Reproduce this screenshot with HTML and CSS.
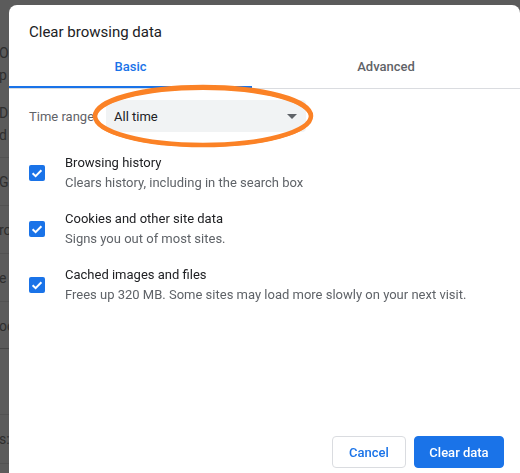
FILE: index.html
```html
<!DOCTYPE html>
<html>
<head>
<meta charset="utf-8">
<link rel="stylesheet" href="styles.css">
</head>
<body>
<div class="backdrop">
  <div class="bg-top"></div>
  <div class="bg-row r1"><span>O</span><span>p</span></div>
  <div class="bg-row r2"><span>D</span><span>d</span></div>
  <div class="bg-row r3"><span>G</span></div>
  <div class="bg-row r3"><span>ro</span></div>
  <div class="bg-row r3"><span>e</span></div>
  <div class="bg-row r4"><span>oo</span></div>
  <div class="bg-row r5"></div>
  <div class="bg-row r6"><span>s:</span></div>
</div>

<div class="dialog">
  <div class="title">Clear browsing data</div>
  <div class="tabs">
    <div class="tab active">Basic</div>
    <div class="tab">Advanced</div>
  </div>
  <div class="content">
    <div class="range">
      <div class="range-label">Time range</div>
      <div class="select"><span>All time</span><span class="arrow"></span></div>
    </div>
    <div class="items">
      <div class="item">
        <div class="cb"><svg width="16" height="16" viewBox="0 0 16 16"><path d="M3.6 8.2 L6.6 11.1 L12.4 5.2" fill="none" stroke="#fff" stroke-width="2"/></svg></div>
        <div class="item-text"><div class="item-title">Browsing history</div><div class="item-sub">Clears history, including in the search box</div></div>
      </div>
      <div class="item">
        <div class="cb"><svg width="16" height="16" viewBox="0 0 16 16"><path d="M3.6 8.2 L6.6 11.1 L12.4 5.2" fill="none" stroke="#fff" stroke-width="2"/></svg></div>
        <div class="item-text"><div class="item-title">Cookies and other site data</div><div class="item-sub">Signs you out of most sites.</div></div>
      </div>
      <div class="item">
        <div class="cb"><svg width="16" height="16" viewBox="0 0 16 16"><path d="M3.6 8.2 L6.6 11.1 L12.4 5.2" fill="none" stroke="#fff" stroke-width="2"/></svg></div>
        <div class="item-text"><div class="item-title">Cached images and files</div><div class="item-sub">Frees up 320 MB. Some sites may load more slowly on your next visit.</div></div>
      </div>
    </div>
  </div>
  <div class="footer">
    <button class="btn cancel">Cancel</button>
    <button class="btn primary">Clear data</button>
  </div>
</div>

<svg class="circle" width="240" height="80" viewBox="0 0 240 80">
  <ellipse cx="113" cy="34" rx="108" ry="29" fill="none" stroke="#fb8226" stroke-width="4.5"/>
  <ellipse cx="113" cy="35" rx="107.5" ry="28.5" fill="none" stroke="#fb8226" stroke-width="3"/>
</svg>
</body>
</html>
```

FILE: styles.css
```css
html, body {
  margin: 0;
  padding: 0;
  width: 520px;
  height: 473px;
  overflow: hidden;
  background: #5b5b5b;
  font-family: Roboto, "Liberation Sans", Arial, sans-serif;
}

.backdrop {
  display: flex;
  flex-direction: column;
  color: #2e2e2e;
  font-size: 14px;
}

.bg-top {
  height: 40px;
}

.bg-row {
  display: flex;
  flex-direction: column;
  border-bottom: 1px solid #525252;
  margin-left: -1px;
}

.bg-row span {
  line-height: 22px;
}

.r1 { height: 60px; padding-top: 2px; border-bottom: none; }
.r2 { height: 55px; padding-top: 0; }
.r3 { height: 47px; justify-content: center; }
.r4 { height: 47px; justify-content: flex-start; padding-top: 13px; box-sizing: border-box; border-bottom-color: #474747; }
.r5 { height: 65px; }
.r6 { height: 48px; justify-content: center; }

.dialog {
  position: fixed;
  left: 9px;
  top: 5px;
  width: 511px;
  height: 480px;
  background: #fff;
  border-radius: 8px;
  display: flex;
  flex-direction: column;
}

.title {
  padding: 17px 0 0 20px;
  line-height: 20px;
  font-size: 15px;
  color: #202124;
}

.tabs {
  display: flex;
  height: 46px;
  border-bottom: 1px solid #dadce0;
}

.tab {
  box-sizing: border-box;
  padding-top: 15px;
  line-height: 20px;
  font-size: 13px;
  font-weight: 500;
  color: #5f6368;
  text-align: center;
  flex: 1;
}

.tab.active {
  flex: 0 0 243px;
  color: #1a73e8;
  border-bottom: 2px solid #1a73e8;
}

.content {
  padding: 11px 0 0 20px;
}

.range {
  display: flex;
  align-items: center;
  height: 32px;
}

.range-label {
  width: 77px;
  font-size: 13px;
  color: #5f6368;
}

.select {
  width: 200px;
  height: 32px;
  box-sizing: border-box;
  background: #f1f3f4;
  border-radius: 4px;
  display: flex;
  align-items: center;
  justify-content: space-between;
  padding: 0 9px 0 8px;
  font-size: 13px;
  color: #202124;
}

.arrow {
  width: 0;
  height: 0;
  border-left: 5px solid transparent;
  border-right: 5px solid transparent;
  border-top: 5px solid #5f6368;
}

.items {
  display: flex;
  flex-direction: column;
  gap: 16px;
  margin-top: 21px;
}

.item {
  display: flex;
  align-items: center;
  gap: 20px;
}

.cb {
  width: 16px;
  height: 16px;
  background: #1a73e8;
  border-radius: 2px;
  display: flex;
}

.item-title {
  font-size: 13px;
  line-height: 20px;
  color: #202124;
}

.item-sub {
  font-size: 13px;
  line-height: 20px;
  color: #5f6368;
}

.footer {
  margin-top: auto;
  display: flex;
  justify-content: flex-end;
  gap: 8px;
  padding: 0 16px 17px 0;
}

.btn {
  height: 32px;
  box-sizing: border-box;
  border-radius: 4px;
  font-family: Roboto, "Liberation Sans", Arial, sans-serif;
  font-size: 13px;
  font-weight: 500;
  padding: 0;
}

.cancel {
  width: 74px;
  background: #fff;
  border: 1px solid #dadce0;
  color: #1a73e8;
}

.primary {
  width: 90px;
  background: #1a73e8;
  border: 1px solid #1a73e8;
  color: #fff;
}

.circle {
  position: fixed;
  left: 90px;
  top: 82px;
}
```
